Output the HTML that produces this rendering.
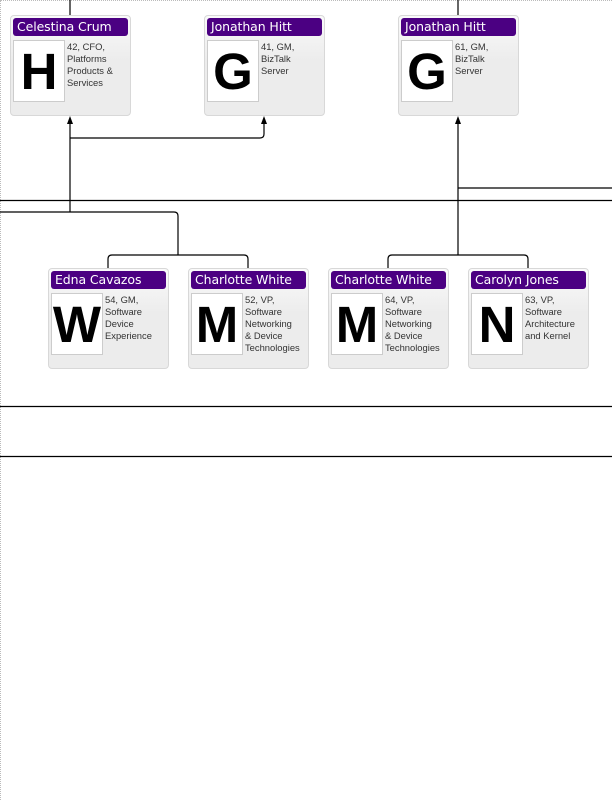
<!DOCTYPE html>
<html><head><meta charset="utf-8"><style>
html,body{margin:0;padding:0;background:#fff;}
body{width:612px;height:792px;position:relative;overflow:hidden;font-family:"DejaVu Sans","Liberation Sans",sans-serif;}
.frame{position:absolute;left:0;top:0;width:620px;height:800px;border-left:1px dotted #bbb;border-top:1px dotted #bbb;box-sizing:border-box;}
.card{position:absolute;width:121px;height:101px;border:1px solid #d8d8d8;border-radius:4px;background:linear-gradient(#fafafa,#ececec 45%,#ececec);box-sizing:border-box;}
.hd{position:absolute;left:2px;top:2px;width:115px;height:18px;background:#4b0082;border-radius:3px;color:#fff;font-size:12.5px;line-height:18px;padding-left:4px;box-sizing:border-box;white-space:nowrap;letter-spacing:-0.1px;}
.ph{position:absolute;left:2px;top:24px;width:52px;height:62px;background:#fff;border:1px solid #ccc;box-sizing:border-box;font-family:"Liberation Sans",sans-serif;font-weight:bold;font-size:51px;line-height:62px;text-align:center;color:#000;}
.tx{position:absolute;left:56px;top:25px;font-family:"Liberation Sans",sans-serif;font-size:9.4px;line-height:12px;color:#333;width:56px;}
svg{position:absolute;left:0;top:0;}
</style></head><body>
<div class="frame"></div>
<svg width="612" height="792">
<g stroke="#000" stroke-width="1.2" fill="none">
<line x1="70" y1="0" x2="70" y2="15"/>
<line x1="458" y1="0" x2="458" y2="15"/>
<line x1="70" y1="120" x2="70" y2="212"/>
<path d="M70 138 H260 Q264 138 264 134 V120"/>
<line x1="0" y1="200.5" x2="612" y2="200.5"/>
<path d="M0 212 H174 Q178 212 178 216 V255"/>
<path d="M108 268 V259 Q108 255 112 255 H244 Q248 255 248 259 V268"/>
<line x1="458" y1="120" x2="458" y2="255"/>
<line x1="458" y1="188" x2="612" y2="188"/>
<path d="M388 268 V259 Q388 255 392 255 H524 Q528 255 528 259 V268"/>
<line x1="0" y1="406.5" x2="612" y2="406.5"/>
<line x1="0" y1="456.5" x2="612" y2="456.5"/>
</g>
<g fill="#000">
<path d="M70 116 L67 124 L73 124 Z"/>
<path d="M264 116 L261 124 L267 124 Z"/>
<path d="M458 116 L455 124 L461 124 Z"/>
</g>
</svg>
<div class="card" style="left:10px;top:15px"><div class="hd">Celestina Crum</div><div class="ph">H</div><div class="tx">42, CFO, Platforms Products &amp; Services</div></div>
<div class="card" style="left:204px;top:15px"><div class="hd">Jonathan Hitt</div><div class="ph">G</div><div class="tx">41, GM, BizTalk<br>Server</div></div>
<div class="card" style="left:398px;top:15px"><div class="hd">Jonathan Hitt</div><div class="ph">G</div><div class="tx">61, GM, BizTalk<br>Server</div></div>
<div class="card" style="left:48px;top:268px"><div class="hd">Edna Cavazos</div><div class="ph">W</div><div class="tx">54, GM, Software Device Experience</div></div>
<div class="card" style="left:188px;top:268px"><div class="hd">Charlotte White</div><div class="ph">M</div><div class="tx">52, VP, Software Networking<br>&amp; Device Technologies</div></div>
<div class="card" style="left:328px;top:268px"><div class="hd">Charlotte White</div><div class="ph">M</div><div class="tx">64, VP, Software Networking<br>&amp; Device Technologies</div></div>
<div class="card" style="left:468px;top:268px"><div class="hd">Carolyn Jones</div><div class="ph">N</div><div class="tx">63, VP, Software Architecture and Kernel</div></div>
</body></html>
